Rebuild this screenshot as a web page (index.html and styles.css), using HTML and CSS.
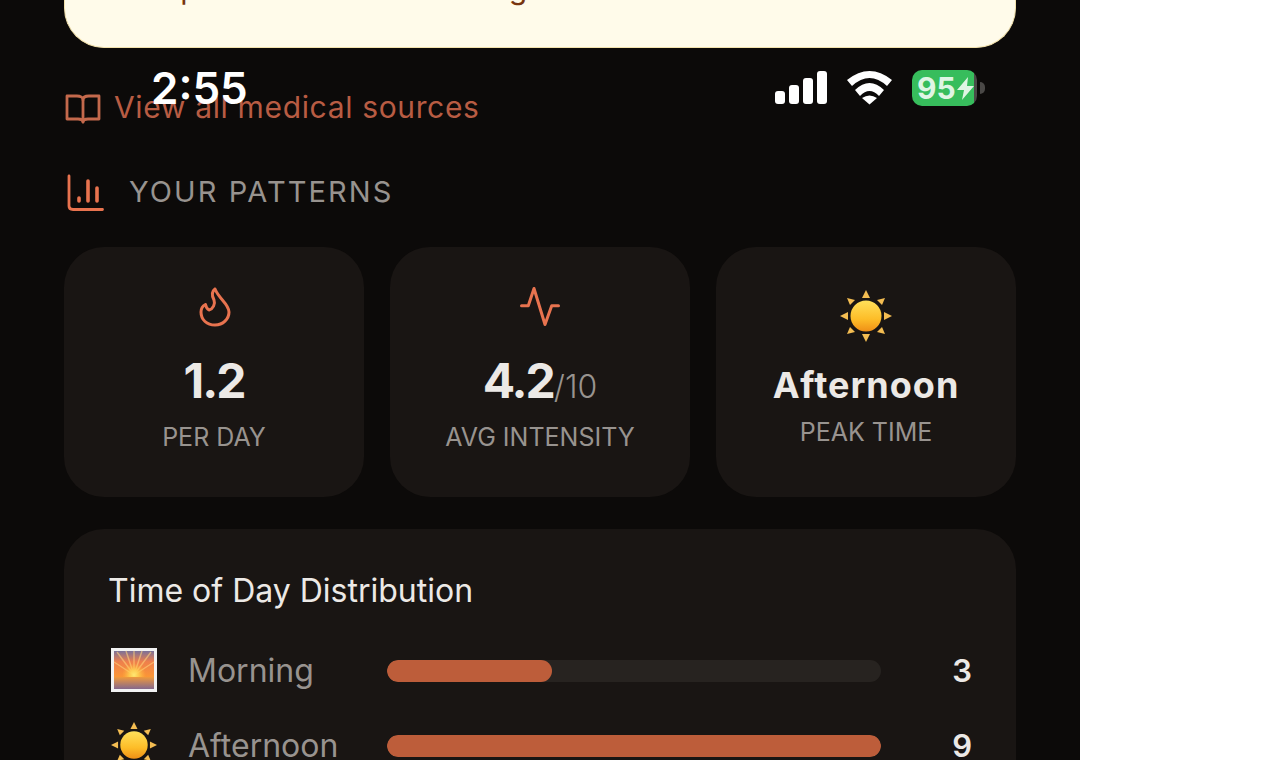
FILE: index.html
```html
<!DOCTYPE html>
<html lang="en">
<head>
<meta charset="UTF-8" />
<meta name="viewport" content="width=device-width, initial-scale=1" />
<title>Your patterns</title>
<link rel="stylesheet" href="styles.css">
</head>
<body>

<div class="phone">

  <!-- Status bar, sits over the scrolled content -->
  <div class="status">
    <span class="clock">2:55</span>
    <div class="status-icons">
      <svg class="signal" width="52" height="34" viewBox="0 0 52 34" fill="#fff">
        <rect x="0" y="20" width="10" height="13" rx="3"/>
        <rect x="14" y="14" width="10" height="19" rx="3"/>
        <rect x="28" y="7" width="10" height="26" rx="3"/>
        <rect x="42" y="0" width="10" height="33" rx="3"/>
      </svg>
      <svg class="wifi" width="46" height="34" viewBox="0 0 46 34" fill="#fff">
        <path d="M0 9 Q22.500 -9 45 9 L40 15 Q22.500 -1 5 15Z"/>
        <path d="M8 19 Q22.500 5 37 19 L32 25 Q22.500 15 13 25Z"/>
        <path d="M15 27 Q22.500 22 30 27 L22.500 33.500Z"/>
      </svg>
      <div class="battery"><span>95</span><svg width="17" height="23" viewBox="0 0 17 23" fill="#dff5e4"><path d="M11 0 L0 13 H7 L5 23 L17 9 H10Z"/></svg></div>
      <span class="battery-cap"></span>
    </div>
  </div>

  <div class="callout"><p>Compare notes with the log</p></div>

  <a class="sources" href="#">
    <svg width="36" height="32" viewBox="0 0 36 32" fill="none" stroke="currentColor" stroke-width="2.800" stroke-linecap="round" stroke-linejoin="round">
      <path d="M18 7 C18 4 15 3 12 3 H2 V26 H13 C16 26 18 27 18 29 C18 27 20 26 23 26 H34 V3 H24 C21 3 18 4 18 7Z"/>
      <path d="M18 7 V29"/>
    </svg>
    <span>View all medical sources</span>
  </a>

  <h2 class="section-title">
    <svg width="38" height="38" viewBox="0 0 38 38" fill="none" stroke="#e8734f" stroke-linecap="round" stroke-linejoin="round">
      <path d="M3 3 V33 Q3 36.500 7 36.500 H36.500" stroke-width="2.800"/>
      <path d="M13 25 V28" stroke-width="3.600"/>
      <path d="M22 8 V28" stroke-width="3.600"/>
      <path d="M31 15 V28" stroke-width="3.600"/>
    </svg>
    <span>YOUR PATTERNS</span>
  </h2>

  <div class="stats">
    <div class="stat">
      <svg class="stat-icon" width="40" height="42" viewBox="0 0 40 42" fill="none" stroke="#e8734f" stroke-width="3" stroke-linecap="round" stroke-linejoin="round">
        <path d="M21 4 C17 7 18 11 20 15 C21.500 19 19 24 15 25 C13 24 12 22 11.500 19.500 C8.500 21 7 24 7 27 C7 35 13 40 21 40 C29 40 35 34 35 27 C35 19 25 14 21 4Z"/>
      </svg>
      <div class="stat-value">1.2</div>
      <div class="stat-label">PER DAY</div>
    </div>
    <div class="stat">
      <svg class="stat-icon" width="40" height="42" viewBox="0 0 40 42" fill="none" stroke="#e8734f" stroke-width="3" stroke-linecap="round" stroke-linejoin="round">
        <path d="M1.500 20.700 H8.300 L14 3.500 L25 39.500 L31.700 20.700 H38.500"/>
      </svg>
      <div class="stat-value">4.2<small>/10</small></div>
      <div class="stat-label">AVG INTENSITY</div>
    </div>
    <div class="stat stat-peak">
      <svg class="stat-icon sun" width="52" height="52" viewBox="0 0 52 52"><use href="#sun"/></svg>
      <div class="stat-value">Afternoon</div>
      <div class="stat-label">PEAK TIME</div>
    </div>
  </div>

  <div class="panel">
    <h3>Time of Day Distribution</h3>
    <div class="dist-row">
      <svg class="dist-icon" width="46" height="46" viewBox="0 0 46 46">
        <rect x="0" y="1" width="46" height="44" fill="#f2f2f2"/>
        <rect x="3" y="4" width="40" height="38" fill="url(#dawn)"/>
        <g stroke="#ffd27a" stroke-width="1.400" opacity=".6">
          <path d="M23 28 L6 5 M23 28 L15 4 M23 28 L23 4 M23 28 L31 4 M23 28 L40 5 M23 28 L43 15 M23 28 L3 15"/>
        </g>
        <rect x="3" y="4" width="40" height="38" fill="url(#glow)"/>
        <rect x="3" y="30" width="40" height="12" fill="url(#water)"/>
      </svg>
      <span class="dist-name">Morning</span>
      <div class="track"><div class="fill" style="width: 33.400%"></div></div>
      <span class="dist-count">3</span>
    </div>
    <div class="dist-row">
      <svg class="dist-icon" width="46" height="46" viewBox="0 0 52 52"><use href="#sun"/></svg>
      <span class="dist-name">Afternoon</span>
      <div class="track"><div class="fill" style="width: 100%"></div></div>
      <span class="dist-count">9</span>
    </div>
  </div>
</div>

<!-- Shared emoji art -->
<svg class="defs" width="0" height="0">
  <defs>
    <linearGradient id="sunGrad" x1="0" y1="0" x2="0" y2="1">
      <stop offset="0" stop-color="#ffe05a"/>
      <stop offset="0.600" stop-color="#fdbd28"/>
      <stop offset="1" stop-color="#ef8f16"/>
    </linearGradient>
    <linearGradient id="dawn" x1="0" y1="0" x2="0" y2="1">
      <stop offset="0" stop-color="#7a7199"/>
      <stop offset="0.280" stop-color="#ee7f4c"/>
      <stop offset="0.680" stop-color="#fb9636"/>
      <stop offset="1" stop-color="#fbb041"/>
    </linearGradient>
    <linearGradient id="water" x1="0" y1="0" x2="0" y2="1">
      <stop offset="0" stop-color="#f09a3c"/>
      <stop offset="1" stop-color="#85688c"/>
    </linearGradient>
    <radialGradient id="glow" gradientUnits="userSpaceOnUse" cx="23" cy="28" r="12">
      <stop offset="0" stop-color="#ffe873"/>
      <stop offset="0.400" stop-color="#ffd452" stop-opacity=".8"/>
      <stop offset="1" stop-color="#ffb640" stop-opacity="0"/>
    </radialGradient>
    <symbol id="sun" viewBox="0 0 52 52">
      <g fill="#f4bd52">
        <path d="M26 0 L30 8 H22Z"/>
        <path d="M26 52 L22 44 H30Z"/>
        <path d="M0 26 L8 22 V30Z"/>
        <path d="M52 26 L44 30 V22Z"/>
        <path d="M7 8 L15 10 L10 15Z"/>
        <path d="M45 8 L42 15 L37 10Z"/>
        <path d="M7 44 L10 37 L15 42Z"/>
        <path d="M45 44 L37 42 L42 37Z"/>
      </g>
      <circle cx="26" cy="26" r="15.500" fill="url(#sunGrad)"/>
    </symbol>
  </defs>
</svg>

</body>
</html>
```

FILE: styles.css
```css
:root {
  --screen: #0c0a09;
  --card: #191513;
  --track: #272320;
  --accent: #e8734f;
  --bar: #bd5d3a;
  --link: #b85c43;
  --text: #ece9e6;
  --muted: #98938f;
  --cream: #fffbea;
}

html, body {
  margin: 0;
  height: 100%;
  background: #fff;
  overflow: hidden;
}

body {
  font-family: Inter, "Liberation Sans", sans-serif;
  color: var(--text);
}

.defs {
  position: absolute;
}

.phone {
  position: relative;
  width: 1080px;
  height: 760px;
  box-sizing: border-box;
  padding: 0 64px;
  background: var(--screen);
  overflow: hidden;
}

/* Status bar */
.status {
  position: absolute;
  top: 64px;
  left: 151px;
  right: 95px;
  display: flex;
  justify-content: space-between;
  align-items: center;
  z-index: 2;
}

.clock {
  font-size: 44px;
  line-height: 48px;
  font-weight: 600;
  color: #fff;
}

.status-icons {
  display: flex;
  align-items: center;
}

.signal {
  margin-right: 20px;
}

.wifi {
  margin-right: 19px;
}

.battery {
  width: 65px;
  height: 36px;
  box-sizing: border-box;
  padding-left: 5px;
  border-radius: 10px;
  background: linear-gradient(90deg, #37bd5c 95%, #4a4846 95%);
  color: #dff5e4;
  display: flex;
  align-items: center;
  font-size: 30px;
  font-weight: 700;
}

.battery svg {
  margin-left: 1px;
}

.battery-cap {
  width: 5px;
  height: 12px;
  margin-left: 3px;
  border-radius: 0 6px 6px 0;
  background: #4a4846;
}

/* Callout, mostly scrolled off */
.callout {
  height: 48px;
  box-sizing: border-box;
  padding: 0 44px 0 49px;
  border: solid #f3e2ac;
  border-width: 0 1px 1px;
  border-radius: 0 0 40px 40px;
  background: var(--cream);
  overflow: hidden;
}

.callout p {
  margin: -30px 0 0;
  font-size: 30px;
  line-height: 36px;
  word-spacing: 5.700px;
  color: #78350f;
  white-space: nowrap;
}

.sources {
  display: flex;
  align-items: center;
  gap: 13px;
  margin-top: 41px;
  color: var(--link);
  font-size: 30px;
  line-height: 36px;
  letter-spacing: 0.650px;
  text-decoration: none;
}

.sources svg {
  margin: 4px 0 0 1px;
  color: #c4694c;
}

.section-title {
  display: flex;
  align-items: center;
  gap: 25px;
  margin: 48px 0 0 2px;
  font-size: 29px;
  line-height: 38px;
  font-weight: 400;
  letter-spacing: 2.100px;
  color: var(--muted);
}

/* Stat cards */
.stats {
  display: grid;
  grid-template-columns: repeat(3, 1fr);
  gap: 26px;
  margin-top: 36px;
}

.stat {
  height: 250px;
  box-sizing: border-box;
  padding-top: 38px;
  border-radius: 40px;
  background: var(--card);
  display: flex;
  flex-direction: column;
  align-items: center;
}

.stat-icon {
  display: block;
}

.stat-value {
  height: 52px;
  margin-top: 28px;
  font-size: 48px;
  line-height: 52px;
  font-weight: 700;
  letter-spacing: -2px;
}

.stat-value small {
  font-size: 32px;
  font-weight: 300;
  letter-spacing: 0;
  color: var(--muted);
}

.stat-label {
  margin-top: 15px;
  font-size: 25px;
  line-height: 30px;
  color: var(--muted);
}

.stat-peak {
  padding-top: 43px;
}

.stat-peak .stat-value {
  height: 44px;
  margin-top: 21px;
  font-size: 36px;
  line-height: 44px;
  letter-spacing: 1px;
}

.stat-peak .stat-label {
  margin-top: 10px;
}

/* Distribution panel */
.panel {
  margin-top: 32px;
  padding: 42px 44px 0;
  min-height: 300px;
  border-radius: 40px;
  background: var(--card);
}

.panel h3 {
  margin: 0;
  font-size: 32px;
  line-height: 40px;
  font-weight: 400;
}

.dist-row {
  display: flex;
  align-items: center;
  height: 46px;
  margin-top: 36px;
}

.dist-row + .dist-row {
  margin-top: 29px;
}

.dist-icon {
  flex: none;
  margin-left: 3px;
}

.dist-name {
  width: 199px;
  margin-left: 31px;
  flex: none;
  font-size: 32px;
  color: var(--muted);
}

.track {
  width: 494px;
  height: 22px;
  margin-top: 2px;
  flex: none;
  border-radius: 11px;
  background: var(--track);
  overflow: hidden;
}

.fill {
  height: 100%;
  border-radius: 11px;
  background: var(--bar);
}

.dist-count {
  margin-left: auto;
  font-size: 31px;
  font-weight: 600;
}
```
